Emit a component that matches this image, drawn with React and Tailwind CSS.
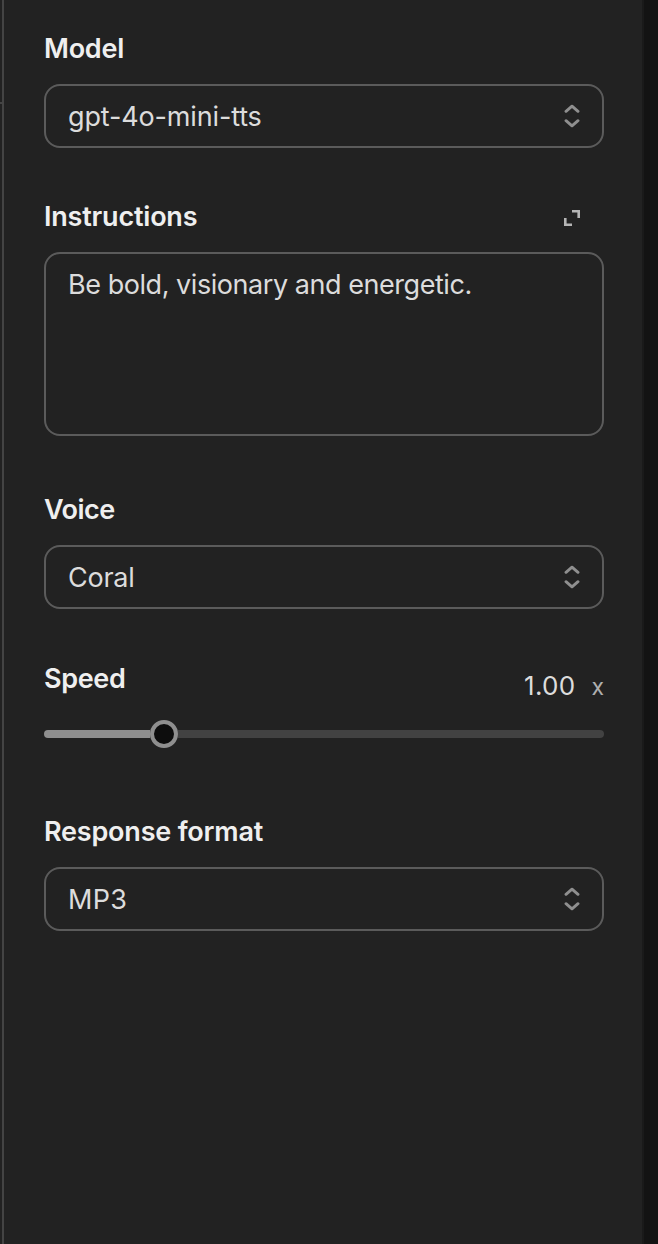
function Chevrons() {
  return (
    <svg className="h-6 w-4 shrink-0" viewBox="0 0 16 24" fill="none" stroke="#8f8f8f" strokeWidth="2.9" strokeLinecap="round" strokeLinejoin="round">
      <path d="M2 7.3 8 2.2l6 5.1M2 16.7l6 5.1 6-5.1" />
    </svg>
  );
}

function Label({ children, className }) {
  return (
    <span className={`block h-10 text-[27px] leading-10 font-[560] whitespace-nowrap text-[#efefef] ${className}`}>
      {children}
    </span>
  );
}

function Select({ value, className }) {
  return (
    <button className="flex h-16 w-full items-center justify-between rounded-2xl border-2 border-[#5b5b5b] px-[22px]">
      <span className={`pt-0.5 text-[27px] leading-10 whitespace-nowrap text-[#dcdcdc] ${className}`}>{value}</span>
      <Chevrons />
    </button>
  );
}

export default function App() {
  return (
    <div className="flex h-[1244px] w-[658px] overflow-hidden bg-[#222222] font-['Inter',sans-serif]">
      <div className="w-0.5 shrink-0 pt-[102px]">
        <div className="h-0.5 bg-[#444444]" />
      </div>
      <div className="w-0.5 shrink-0 bg-[#444444]" />
      <main className="flex w-[638px] shrink-0 flex-col pr-[38px] pl-10">
        <section className="pt-[29px]">
          <Label className="tracking-[-0.25px]">Model</Label>
          <div className="pt-[15px]">
            <Select value="gpt-4o-mini-tts" className="tracking-[-0.15px]" />
          </div>
        </section>

        <section className="pt-[49px]">
          <div className="flex items-center justify-between pr-6">
            <Label className="tracking-[-0.2px]">Instructions</Label>
            <svg className="mt-0.5 h-4 w-4" viewBox="0 0 16 16" fill="none" stroke="#b5b5b5" strokeWidth="2.6">
              <path d="M8 1.3h6.7V8M1.3 8v6.7H8" />
            </svg>
          </div>
          <div className="mt-[15px] h-[184px] rounded-2xl border-2 border-[#5b5b5b] px-[22px] pt-[11px]">
            <p className="text-[27px] leading-10 tracking-[-0.45px] whitespace-nowrap text-[#dcdcdc]">Be bold, visionary and energetic.</p>
          </div>
        </section>

        <section className="pt-[54px]">
          <Label className="tracking-[-0.5px]">Voice</Label>
          <div className="pt-[15px]">
            <Select value="Coral" className="tracking-[-0.25px]" />
          </div>
        </section>

        <section className="pt-[50px]">
          <div className="flex items-start justify-between">
            <Label className="tracking-[-0.35px]">Speed</Label>
            <div className="flex h-12 items-baseline gap-4 pt-[7px] leading-10">
              <span className="text-[26px] tracking-[0.3px] text-[#dcdcdc]">1.00</span>
              <span className="text-[23px] text-[#afafaf]">x</span>
            </div>
          </div>
          <div className="mt-[13px] flex h-7 items-center">
            <div className="h-2 w-[106px] rounded-l-full bg-[#8f8f8f]" />
            <div className="size-7 rounded-full border-4 border-[#8f8f8f] bg-[#0d0d0d]" />
            <div className="h-2 flex-1 rounded-r-full bg-[#424242]" />
          </div>
        </section>

        <section className="pt-16">
          <Label className="tracking-[-0.2px]">Response format</Label>
          <div className="pt-[15px]">
            <Select value="MP3" className="tracking-[0.3px]" />
          </div>
        </section>
      </main>
      <div className="w-0.5 shrink-0 bg-[#1a1a1a]" />
      <div className="flex-1 bg-[#131313]" />
    </div>
  );
}
